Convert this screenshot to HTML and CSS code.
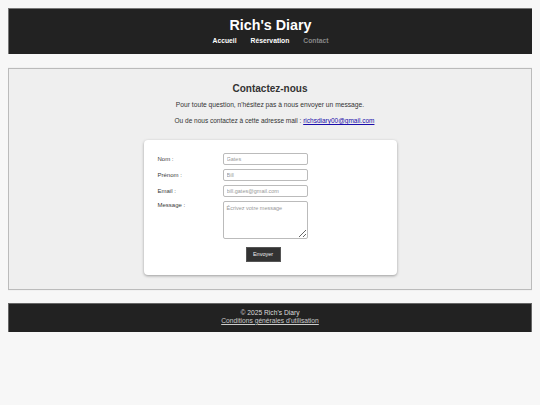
FILE: index.html
```html
<!DOCTYPE html>
<html lang="fr">
<head>
<meta charset="utf-8">
<title>Rich's Diary - Contact</title>
<link rel="stylesheet" href="styles.css">
</head>
<body>
<header class="site-header">
  <h1 class="site-title">Rich's Diary</h1>
  <nav class="site-nav">
    <a href="#" class="nav-link">Accueil</a>
    <a href="#" class="nav-link">Réservation</a>
    <a href="#" class="nav-link nav-link--current">Contact</a>
  </nav>
</header>
<main class="contact">
  <h2 class="contact-title">Contactez-nous</h2>
  <p class="contact-text">Pour toute question, n'hésitez pas à nous envoyer un message.</p>
  <p class="contact-text contact-text--mail">Ou de nous contactez à cette adresse mail : <a href="#" class="mail-link">richsdiary00@gmail.com</a></p>
  <div class="card">
    <form class="contact-form">
      <label class="form-label" for="nom">Nom :</label>
      <input class="form-input" id="nom" type="text" placeholder="Gates">
      <label class="form-label" for="prenom">Prénom :</label>
      <input class="form-input" id="prenom" type="text" placeholder="Bill">
      <label class="form-label" for="email">Email :</label>
      <input class="form-input" id="email" type="email" placeholder="bill.gates@gmail.com">
      <label class="form-label form-label--top" for="message">Message :</label>
      <textarea class="form-textarea" id="message" placeholder="Écrivez votre message"></textarea>
      <button class="form-button" type="button">Envoyer</button>
    </form>
  </div>
</main>
<footer class="site-footer">
  <p class="footer-line">© 2025 Rich's Diary</p>
  <a href="#" class="footer-link">Conditions générales d'utilisation</a>
</footer>
</body>
</html>
```

FILE: styles.css
```css
html, body {
  margin: 0;
  padding: 0;
}
body {
  margin: 8px;
  background: #f7f7f7;
  font-family: "Liberation Sans", Arial, sans-serif;
  color: #333;
}

.site-header {
  background: #222;
  border-top: 1px solid #777;
  border-left: 1px solid #777;
  padding: 8px 0 8px;
  text-align: center;
  height: 29px;
}
.site-title {
  margin: 0;
  font-size: 14.3px;
  line-height: 16px;
  font-weight: bold;
  color: #fff;
}
.site-nav {
  margin-top: 4px;
  display: flex;
  justify-content: center;
  gap: 14px;
  line-height: 8px;
}
.nav-link {
  color: #fff;
  font-size: 6.75px;
  font-weight: bold;
  text-decoration: none;
}
.nav-link--current {
  color: #888;
}

.contact {
  margin-top: 14px;
  background: #efefef;
  border: 1px solid #bbb;
  box-shadow: 0 0 1px rgba(0,0,0,0.15);
  padding: 14px 0 14px;
  display: flex;
  flex-direction: column;
  align-items: center;
}
.contact-title {
  margin: 0;
  font-size: 10px;
  line-height: 12px;
  font-weight: bold;
  color: #333;
}
.contact-text {
  margin: 6px 0 0;
  font-size: 6.7px;
  line-height: 8px;
  color: #333;
}
.contact-text--mail {
  margin-top: 8px;
  padding-left: 9px;
  font-size: 6.5px;
}
.mail-link {
  color: #1a0dab;
  text-decoration: underline;
}

.card {
  margin-top: 14.6px;
  width: 253px;
  box-sizing: border-box;
  background: #fff;
  border-radius: 4px;
  box-shadow: 0 1px 3px rgba(0,0,0,0.35);
  padding: 13px 14px;
}
.contact-form {
  display: grid;
  grid-template-columns: 65px 85px;
  row-gap: 4.3px;
}
.form-label {
  font-size: 6px;
  line-height: 12px;
  color: #3a3a3a;
}
.form-label--top {
  line-height: 9px;
}
.form-input,
.form-textarea {
  box-sizing: border-box;
  width: 85px;
  margin: 0;
  border: 1px solid #bbb;
  border-radius: 2px;
  padding: 0 3px;
  font-family: "Liberation Sans", Arial, sans-serif;
  font-size: 5.5px;
  color: #333;
  background: #fff;
}
.form-input {
  height: 12px;
}
.form-textarea {
  height: 38px;
  padding-top: 3px;
  resize: both;
}
.form-input::placeholder,
.form-textarea::placeholder {
  color: #999;
}
.form-button {
  grid-column: 2;
  justify-self: start;
  margin: 3px 0 0 23px;
  width: 35px;
  height: 15px;
  padding: 0;
  background: #333;
  color: #eee;
  border: 1px solid #555;
  font-family: "Liberation Sans", Arial, sans-serif;
  font-size: 5.5px;
}

.site-footer {
  margin-top: 13px;
  background: #222;
  border: 1px solid #666;
  border-bottom: none;
  padding: 5px 0 7px;
  text-align: center;
  color: #ddd;
  font-size: 6.7px;
  line-height: 8px;
}
.footer-line {
  margin: 0;
}
.footer-link {
  color: #ccc;
  text-decoration: underline;
}
```
